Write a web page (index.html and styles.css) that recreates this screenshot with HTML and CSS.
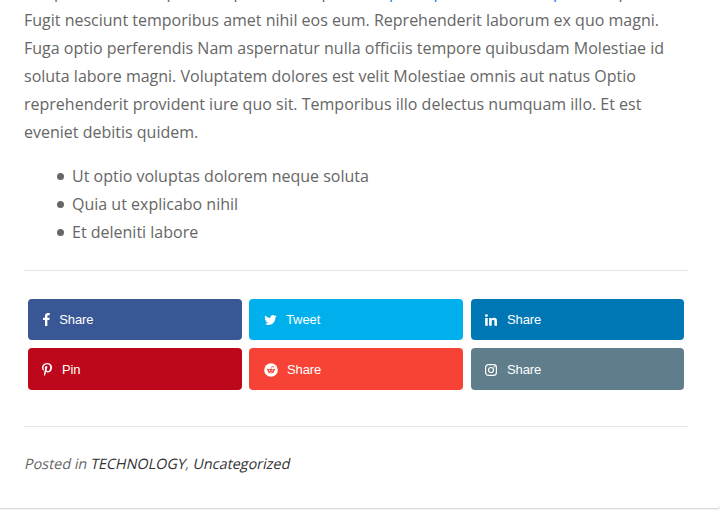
FILE: index.html
```html
<!DOCTYPE html>
<html lang="en">
<head>
<meta charset="utf-8">
<title>Post</title>
<link rel="stylesheet" href="styles.css">
</head>
<body>
<article class="post">
  <div class="clipped-line"><span>p</span><span>p</span><span>p</span><span>p</span><a>p</a><a>p</a><a>p</a><span>p</span></div>
  <p class="post-text">Fugit nesciunt temporibus amet nihil eos eum. Reprehenderit laborum ex quo magni. Fuga optio perferendis Nam aspernatur nulla officiis tempore quibusdam Molestiae id soluta labore magni. Voluptatem dolores est velit Molestiae omnis aut natus Optio reprehenderit provident iure quo sit. Temporibus illo delectus numquam illo. Et est eveniet debitis quidem.</p>
  <ul class="post-list">
    <li>Ut optio voluptas dolorem neque soluta</li>
    <li>Quia ut explicabo nihil</li>
    <li>Et deleniti labore</li>
  </ul>
  <div class="share">
    <a class="btn facebook"><svg class="icon" viewBox="479 0 864 1792"><path d="M1343 12v264h-157q-86 0-116 36t-30 108v189h293l-39 296h-254v759h-306v-759h-255v-296h255v-218q0-186 104-288.5t277-102.5q147 0 228 12z"/></svg>Share</a>
    <a class="btn twitter"><svg class="icon" viewBox="64 0 1664 1792"><path d="M1684 408q-67 98-162 167 1 14 1 42 0 130-38 259.5t-115.5 248.5-184.5 210.5-258 146-323 54.5q-271 0-496-145 35 4 78 4 225 0 401-138-105-2-188-64.5t-114-159.5q33 5 61 5 43 0 85-11-112-23-185.5-111.5t-73.5-205.5v-4q68 38 146 41-66-44-105-115t-39-154q0-88 44-163 121 149 294.5 238.5t371.5 99.5q-8-38-8-74 0-134 94.5-228.5t228.5-94.5q140 0 236 102 109-21 205-78-37 115-142 178 93-10 186-50z"/></svg>Tweet</a>
    <a class="btn linkedin"><svg class="icon" viewBox="128 0 1536 1792"><path d="M477 625v991h-330v-991h330zm21-306q1 73-50.5 122t-135.5 49h-2q-82 0-132-49t-50-122q0-74 51.5-122.5t134.5-48.5 133 48.5 51 122.5zm1166 729v568h-329v-530q0-105-40.5-164.5t-126.5-59.5q-63 0-105.5 34.5t-63.5 85.5q-11 30-11 81v553h-329q2-399 2-647t-1-296l-1-48h329v144h-2q20-32 41-56t56.5-52 87-43.5 114.5-15.5q171 0 275 113.5t104 332.5z"/></svg>Share</a>
    <a class="btn pinterest"><svg class="icon" viewBox="256 0 1280 1792"><path d="M256 597q0-108 37.5-203.5t103.5-166.5 152-123 185-78 202-26q158 0 294 66.5t221 193.5 85 287q0 96-19 188t-60 177-100 149.5-145 103-189 38.5q-68 0-135-32t-96-88q-10 39-28 112.5t-23.5 95-20.5 71-26 71-32 62.5-46 77.5-62 86.5l-14 5-9-10q-15-157-15-188 0-92 21.5-206.5t66.5-287.5 52-203q-32-65-32-169 0-83 52-156t132-73q61 0 95 40.5t34 102.5q0 66-44 191t-44 187q0 63 45 104.5t109 41.5q55 0 102-25t78.5-68 56-95 38-110.5 20-111 6.5-99.5q0-173-109.5-269.5t-285.5-96.5q-200 0-334 129.5t-134 328.5q0 44 12.5 85t27 65 27 45.5 12.5 30.5q0 28-15 73t-37 45q-2 0-17-3-51-15-90.5-56t-61-94.5-32.5-108-11-106.5z"/></svg>Pin</a>
    <a class="btn reddit"><svg class="icon" viewBox="0 0 14 14"><circle cx="7" cy="7" r="6.8"/><g class="cut"><ellipse cx="7" cy="8" rx="3.1" ry="2.3"/><circle cx="3.8" cy="6.7" r=".9"/><circle cx="10.2" cy="6.7" r=".9"/><circle cx="9.2" cy="3.8" r=".7"/><path class="line" d="M7 5.8l.5-2.3 1.7.3"/></g><circle cx="5.7" cy="7.4" r=".65"/><circle cx="8.3" cy="7.4" r=".65"/><path class="smile" d="M5.6 9q1.4.9 2.8 0"/></svg>Share</a>
    <a class="btn instagram"><svg class="icon" viewBox="0 0 12 14"><g class="outline"><rect x=".6" y="1.6" width="10.8" height="10.8" rx="2.8"/><circle cx="6" cy="7" r="2.5"/></g><circle cx="9.2" cy="3.8" r=".75"/></svg>Share</a>
  </div>
  <footer class="meta">Posted in <a>TECHNOLOGY</a>, <a>Uncategorized</a></footer>
</article>
</body>
</html>
```
FILE: styles.css
```css
body {
  display: flow-root;
  margin: 0;
  height: 510px;
  overflow: hidden;
  background: #f7f7f7;
  color: #666;
  font: 16px/28px "Open Sans", sans-serif;
}
.post {
  box-sizing: border-box;
  height: 530px;
  margin-top: -22px;
  padding: 0 32px 0 24px;
  background: #fff;
  border-bottom-right-radius: 3px;
  box-shadow: 0 1px 1px #d5d5d5;
}
.clipped-line {
  display: grid;
  grid-template-columns: 112.5px 67px 88px 67.5px 44.5px 119.5px 65.5px 20px;
  padding-left: 30px;
}
.clipped-line a { color: #0a7cff; }
.post-text { margin: 0 0 16px; }
.post-list { margin: 0; padding: 0 0 0 33px; list-style: none; }
.post-list li { display: flex; align-items: center; gap: 8px; }
.post-list li::before {
  content: "";
  width: 7px;
  height: 7px;
  margin-top: 1px;
  border-radius: 50%;
  background: #666;
}
.share {
  display: grid;
  grid-template-columns: 214px 214px 213px;
  grid-template-rows: 41px 42px;
  gap: 8px 7.5px;
  margin-top: 24px;
  padding: 28px 4px 36px;
  border: solid #e6e6e6;
  border-width: 1px 0;
}
.btn {
  display: flex;
  align-items: center;
  padding-left: 14px;
  border-radius: 4px;
  color: #fff;
  font: 13px/20px "Liberation Sans", Arial, sans-serif;
}
.icon { height: 14px; margin-right: 10px; fill: #fff; }
.facebook { background: #3a5795; padding-left: 15px; }
.facebook .icon { margin-right: 9.5px; }
.twitter { background: #00b0ed; padding-left: 15px; }
.twitter .icon { margin-right: 9px; }
.linkedin { background: #0077b5; }
.pinterest { background: #bd081c; }
.reddit { background: #f64336; padding-left: 14.5px; }
.reddit .icon { margin-right: 9.5px; }
.instagram { background: #607d8b; }
.twitter, .reddit { margin: 0 .5px 0 -.5px; }
.pinterest, .reddit, .instagram { padding-top: 1px; }
.btn { letter-spacing: -.1px; }
.cut { fill: #f64336; }
.line { fill: none; stroke: #f64336; stroke-width: .5; }
.smile { fill: none; stroke: #fff; stroke-width: .6; }
.outline { fill: none; stroke: #fff; stroke-width: 1.2; }
.meta {
  margin-top: 23px;
  font-size: 14.4px;
  transform: skewX(-12deg);
  transform-origin: 0 19px;
}
.meta a { color: #333; }
```
